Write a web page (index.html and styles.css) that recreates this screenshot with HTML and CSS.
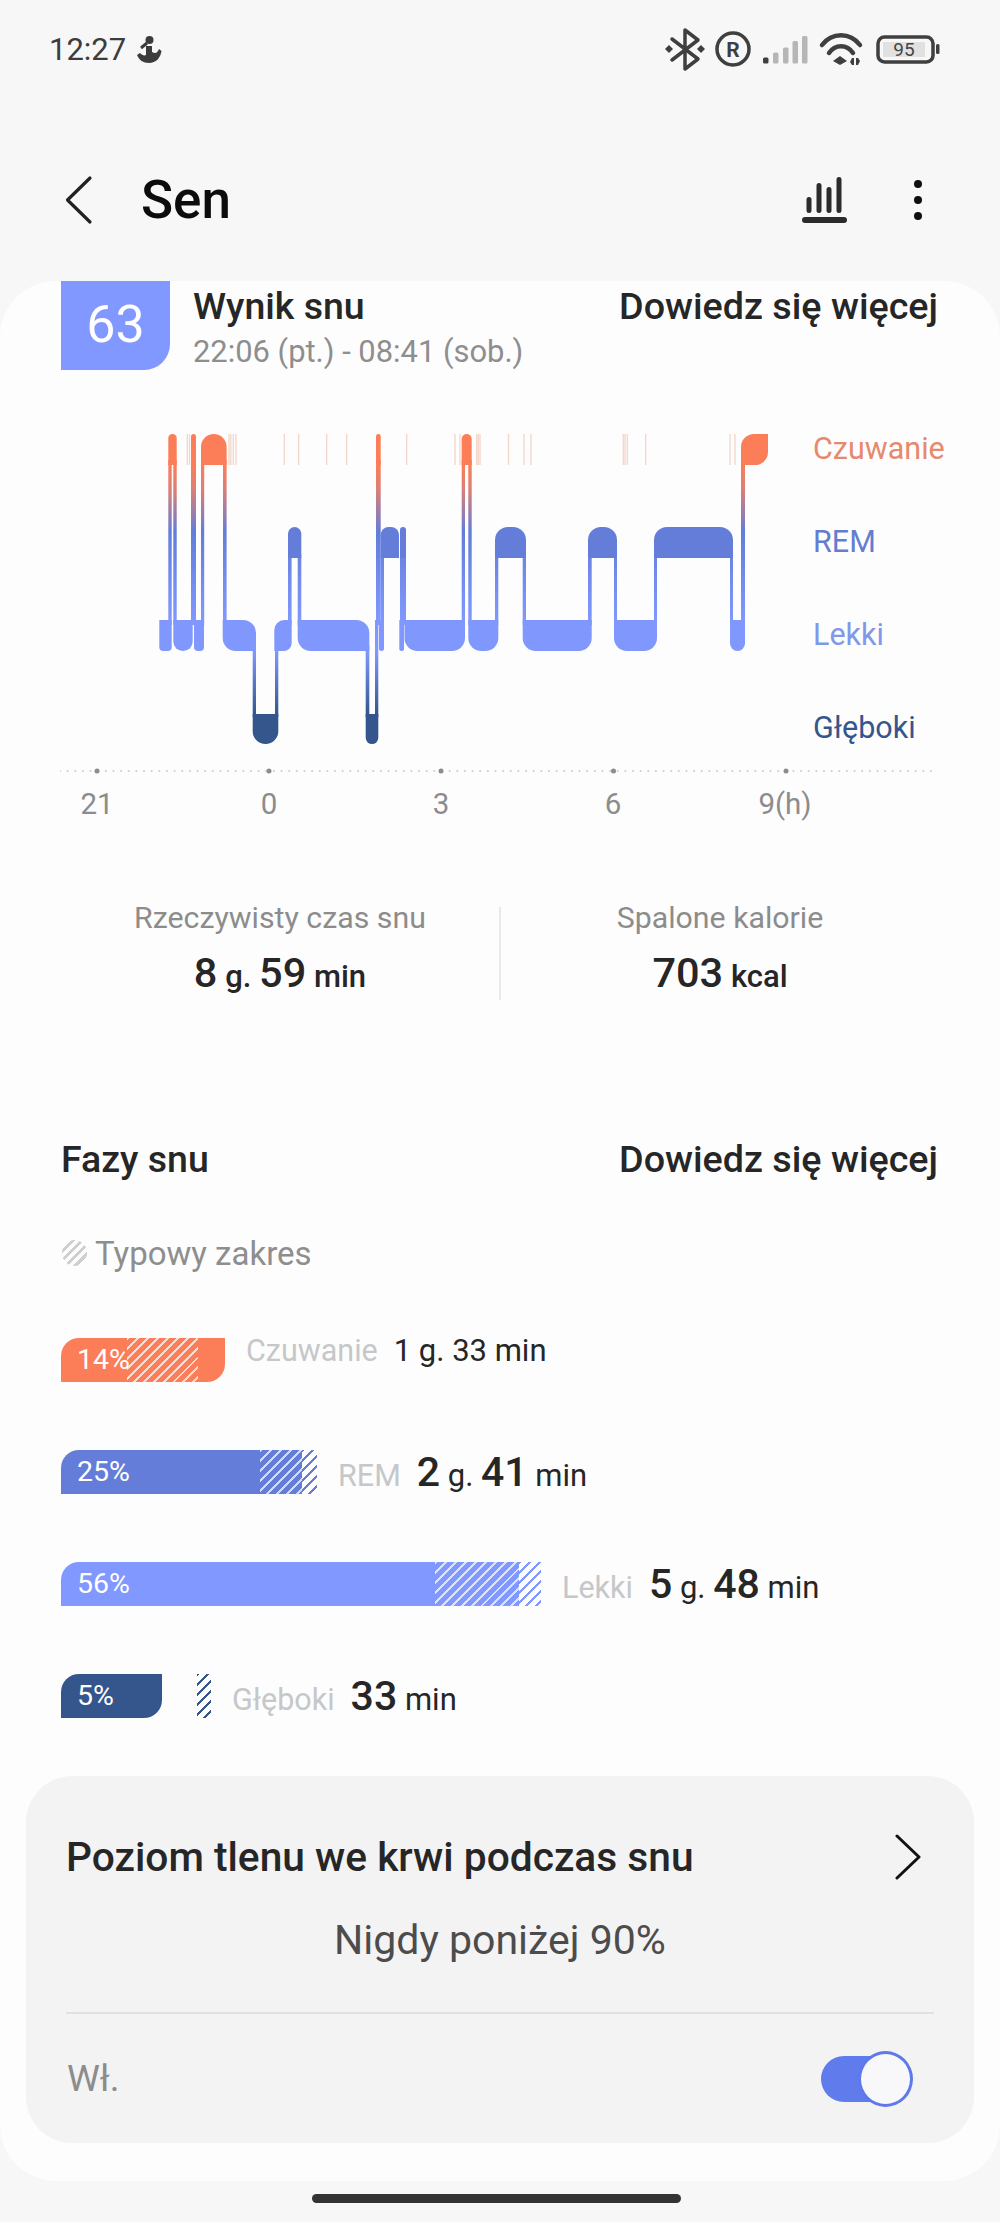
FILE: index.html
```html
<!DOCTYPE html>
<html lang="pl">
<head>
<meta charset="utf-8">
<title>Sen</title>
<link rel="stylesheet" href="styles.css">
</head>
<body>
<div class="screen">
  <div class="status">
    <span class="time">12:27</span>
    <svg class="status-fig" width="26" height="30" viewBox="0 0 26 30"><circle cx="13.5" cy="6" r="4"/><path d="M10 12L16 12L16 18C20 20 21 19 23 15L25.500 17C24.500 24 20 29 13 29C7 29 3 26 1 21L4 19C6 21 8 22 10 21Z"/><path class="fig-line" d="M5 14L11 9"/></svg>
    <svg class="status-icons" width="285" height="46" viewBox="660 25 285 46">
      <g class="ic-line"><path d="M672 38L698 58L685 68V29L698 39L672 59"/></g>
      <path class="ic-fill" d="M669 44L673 48L669 52L665 48ZM701 44L705 48L701 52L697 48Z"/>
      <circle class="ic-line" cx="733" cy="48" r="16"/>
      <text class="ic-r" x="733" y="55.500">R</text>
      <rect class="ic-fill" x="763" y="56.500" width="5.500" height="6" rx="1.500"/>
      <rect class="ic-dim" x="773" y="51.500" width="5.500" height="11" rx="1.500"/>
      <rect class="ic-dim" x="783" y="46.500" width="5.500" height="16" rx="1.500"/>
      <rect class="ic-dim" x="792.500" y="40" width="5.500" height="22.500" rx="1.500"/>
      <rect class="ic-dim" x="802" y="35" width="5.500" height="27.500" rx="1.500"/>
      <g class="ic-wifi"><path d="M822 44C832 31 850 31 860 44"/><path d="M829 52C835 43 847 43 853 52"/></g>
      <path class="ic-fill" d="M840 55L847 60L840 64L833 60Z"/>
      <path class="ic-fill" d="M852 57L854 57L854 64L852 64L850 61ZM856 57L858 57L860 60L858 64L856 64Z"/>
      <rect class="ic-line" x="878" y="36" width="55" height="25" rx="6.500"/>
      <rect class="ic-batt" x="883" y="41" width="42" height="15"/>
      <text class="ic-pct" x="904" y="55">95</text>
      <rect class="ic-fill" x="936" y="43" width="3.500" height="10" rx="1.500"/>
    </svg>
  </div>

  <div class="appbar">
    <svg class="back" width="30" height="50" viewBox="0 0 30 50"><path d="M26 3L3.500 25L26 47"/></svg>
    <h1 class="title">Sen</h1>
    <svg class="chart-ic" width="50" height="50" viewBox="0 0 50 50"><path d="M9 24.500V35.500M19 10.500V35.500M29 14.500V35.500M39 4.500V35.500"/><path class="chart-base" d="M5 45H44"/></svg>
    <svg class="dots" width="20" height="50" viewBox="0 0 20 50"><circle cx="10" cy="9" r="4"/><circle cx="10" cy="25" r="4"/><circle cx="10" cy="41" r="4"/></svg>
  </div>

  <main class="card">
    <div class="score-row">
      <div class="badge">63</div>
      <div class="score-text">
        <div class="heading">Wynik snu</div>
        <div class="sub">22:06 (pt.) - 08:41 (sob.)</div>
      </div>
      <div class="link">Dowiedz się więcej</div>
    </div>

    <div class="plot-row">
      <svg class="plot" width="640" height="360" viewBox="150 402 640 360">
        <defs>
          <linearGradient id="stem" gradientUnits="userSpaceOnUse" x1="0" y1="465" x2="0" y2="714">
            <stop offset="0" stop-color="#fb7e58"/>
            <stop offset="0.1" stop-color="#d97f78"/>
            <stop offset="0.27" stop-color="#637dd9"/>
            <stop offset="0.62" stop-color="#8098fe"/>
            <stop offset="0.75" stop-color="#8098fe"/>
            <stop offset="1" stop-color="#34568c"/>
          </linearGradient>
        </defs>
        <g class="ticks">
          <path d="M187.300 434V465M189.500 434V465M229 434V465M230.800 434V465M233.300 434V465M236 434V465M284.300 434V465M298.700 434V465M326.700 434V465M346.700 434V465M406.700 434V465M455 434V465M460 434V465M476.700 434V465M478.300 434V465M480 434V465M508.500 434V465M524 434V465M531 434V465M623.300 434V465M625 434V465M627.300 434V465M645.700 434V465M730 434V465M735 434V465"/>
        </g>
        <g fill="url(#stem)">
          <rect x="168.300" y="460" width="3.400" height="165"/>
          <rect x="173.300" y="460" width="3.400" height="165"/>
          <rect x="191" y="460" width="5" height="165"/>
          <rect x="201" y="460" width="3.200" height="165"/>
          <rect x="223" y="460" width="3.600" height="165"/>
          <rect x="288" y="555" width="3.600" height="70"/>
          <rect x="297.700" y="555" width="3.600" height="70"/>
          <rect x="376" y="460" width="4.700" height="165"/>
          <rect x="380.700" y="555" width="3.300" height="70"/>
          <rect x="400" y="555" width="6" height="70"/>
          <rect x="461.700" y="460" width="3.300" height="165"/>
          <rect x="468.300" y="460" width="3.400" height="165"/>
          <rect x="495" y="555" width="3.300" height="70"/>
          <rect x="522.700" y="555" width="3.300" height="70"/>
          <rect x="588" y="555" width="3.700" height="70"/>
          <rect x="614" y="555" width="3" height="70"/>
          <rect x="654" y="555" width="3" height="70"/>
          <rect x="730" y="555" width="3" height="70"/>
          <rect x="741" y="460" width="4" height="165"/>
          <rect x="252.700" y="645" width="3.300" height="72"/>
          <rect x="275" y="645" width="3.300" height="72"/>
          <rect x="365.700" y="645" width="3.600" height="72"/>
          <rect x="375" y="620" width="3.300" height="97"/>
        </g>
        <g class="st-wake">
          <path d="M168.300 465V438.200A4.200 4.200 0 0 1 176.700 438.200V465Z"/>
          <path d="M191 465V436.500A2.500 2.500 0 0 1 196 436.500V465Z"/>
          <path d="M201 465V446.800A12.800 12.800 0 0 1 226.600 446.800V465Z"/>
          <path d="M376 465V436.300A2.350 2.350 0 0 1 380.700 436.300V465Z"/>
          <path d="M461.700 465V439A5 5 0 0 1 471.700 439V465Z"/>
          <path d="M741 465V447A13 13 0 0 1 754 434H768V452A13 13 0 0 1 755 465Z"/>
        </g>
        <g class="st-rem">
          <path d="M288 558V533.600A6.650 6.650 0 0 1 301.300 533.600V558Z"/>
          <path d="M380.700 558V535A8 8 0 0 1 388.700 527H391A8 8 0 0 1 399 535V558Z"/>
          <path d="M400 558V530A3 3 0 0 1 406 530V558Z"/>
          <path d="M495 558V540A13 13 0 0 1 508 527H513A13 13 0 0 1 526 540V558Z"/>
          <path d="M588 558V540A13 13 0 0 1 601 527H604A13 13 0 0 1 617 540V558Z"/>
          <path d="M654 558V540A13 13 0 0 1 667 527H720A13 13 0 0 1 733 540V558Z"/>
        </g>
        <g class="st-light">
          <path d="M159.300 620H171.700V647A4 4 0 0 1 167.700 651H163.300A4 4 0 0 1 159.300 647Z"/>
          <path d="M173.300 620H192.700V641.500A9.500 9.500 0 0 1 183.200 651H182.800A9.500 9.500 0 0 1 173.300 641.500Z"/>
          <path d="M194 620H204V647A4 4 0 0 1 200 651H198A4 4 0 0 1 194 647Z"/>
          <path d="M222.700 620H243A13 13 0 0 1 256 633V651H235.700A13 13 0 0 1 222.700 638Z"/>
          <path d="M274.300 651V630A10 10 0 0 1 284.300 620H291.700V643A8 8 0 0 1 283.700 651Z"/>
          <path d="M297.700 620H356.300A13 13 0 0 1 369.300 633V651H310.700A13 13 0 0 1 297.700 638Z"/>
          <path d="M379 620H384V648.500A2.500 2.500 0 0 1 379 648.500Z"/>
          <path d="M399.300 620H404V649A2 2 0 0 1 402 651H401.300A2 2 0 0 1 399.300 649Z"/>
          <path d="M404.500 620H465V638A13 13 0 0 1 452 651H417.500A13 13 0 0 1 404.500 638Z"/>
          <path d="M468.300 620H498.300V638A13 13 0 0 1 485.300 651H481.300A13 13 0 0 1 468.300 638Z"/>
          <path d="M522.700 620H591.700V638A13 13 0 0 1 578.700 651H535.700A13 13 0 0 1 522.700 638Z"/>
          <path d="M614 620H657V638A13 13 0 0 1 644 651H627A13 13 0 0 1 614 638Z"/>
          <path d="M730 620H745V643.500A7.500 7.500 0 0 1 730 643.500Z"/>
        </g>
        <g class="st-deep">
          <path d="M252.700 714H278.300V731.200A12.800 12.800 0 0 1 252.700 731.200Z"/>
          <path d="M365.700 714H378.300V737.700A6.300 6.300 0 0 1 365.700 737.700Z"/>
        </g>
      </svg>
      <div class="legend">
        <div class="legend-item lg-wake">Czuwanie</div>
        <div class="legend-item lg-rem">REM</div>
        <div class="legend-item lg-light">Lekki</div>
        <div class="legend-item lg-deep">Głęboki</div>
      </div>
    </div>

    <svg class="axis" width="880" height="18" viewBox="60 762 880 18">
      <path class="axis-dots" d="M60 771H933"/>
      <g class="axis-major"><circle cx="97" cy="771" r="2.500"/><circle cx="269" cy="771" r="2.500"/><circle cx="441" cy="771" r="2.500"/><circle cx="613.500" cy="771" r="2.500"/><circle cx="786" cy="771" r="2.500"/></g>
    </svg>
    <div class="axis-labels">
      <span>21</span><span>0</span><span>3</span><span>6</span><span>9(h)</span>
    </div>

    <div class="stats">
      <div class="stat">
        <div class="stat-label">Rzeczywisty czas snu</div>
        <div class="stat-value"><b>8</b> g. <b>59</b> min</div>
      </div>
      <div class="stat-divider"></div>
      <div class="stat">
        <div class="stat-label">Spalone kalorie</div>
        <div class="stat-value"><b>703</b> kcal</div>
      </div>
    </div>

    <div class="phases-head">
      <div class="heading">Fazy snu</div>
      <div class="link">Dowiedz się więcej</div>
    </div>
    <div class="typical"><span class="typical-ic"></span>Typowy zakres</div>

    <div class="phase phase-wake">
      <div class="bar bar-wake"><span class="pct">14%</span><i class="hatch hatch-wake"></i></div>
      <div class="phase-text"><span class="phase-name">Czuwanie</span><span class="phase-val">1 g. 33 min</span></div>
    </div>
    <div class="phase phase-rem">
      <div class="bar bar-rem"><span class="pct">25%</span><i class="hatch hatch-rem"></i></div>
      <i class="over over-rem"></i>
      <div class="phase-text"><span class="phase-name">REM</span><span class="phase-val"><b>2</b> g. <b>41</b> min</span></div>
    </div>
    <div class="phase phase-light">
      <div class="bar bar-light"><span class="pct">56%</span><i class="hatch hatch-light"></i></div>
      <i class="over over-light"></i>
      <div class="phase-text"><span class="phase-name">Lekki</span><span class="phase-val"><b>5</b> g. <b>48</b> min</span></div>
    </div>
    <div class="phase phase-deep">
      <div class="bar bar-deep"><span class="pct">5%</span></div>
      <i class="over over-deep"></i>
      <div class="phase-text"><span class="phase-name">Głęboki</span><span class="phase-val"><b>33</b> min</span></div>
    </div>

    <section class="oxygen">
      <div class="oxygen-head">
        <div class="heading heading-long">Poziom tlenu we krwi podczas snu</div>
        <svg class="chev" width="28" height="46" viewBox="0 0 28 46"><path d="M3 2L25 23L3 44"/></svg>
      </div>
      <div class="oxygen-val">Nigdy poniżej 90%</div>
      <div class="oxygen-line"></div>
      <div class="oxygen-foot">
        <span class="oxygen-on">Wł.</span>
        <div class="toggle"><span class="track"></span><span class="knob"></span></div>
      </div>
    </section>
  </main>

  <div class="homebar"></div>
</div>
</body>
</html>
```
FILE: styles.css
```css
* { box-sizing: border-box; }
html, body { margin: 0; padding: 0; }
body { background: #f7f7f7; font-family: Roboto, "Noto Sans", sans-serif; color: #262626; }
.screen { width: 1000px; height: 2222px; overflow: hidden; background: #f7f7f7; }
svg { display: block; flex: none; }

/* status bar */
.status { height: 98px; display: flex; align-items: center; padding: 0 55px 0 49px; }
.time { font-size: 31px; color: #3c3c3c; }
.status-fig { margin-left: 10px; fill: #3c3c3c; }
.fig-line { fill: none; stroke: #3c3c3c; stroke-width: 3; }
.status-icons { margin-left: auto; }
.ic-line { fill: none; stroke: #3f3f3f; stroke-width: 3.5; stroke-linejoin: round; stroke-linecap: round; }
.ic-wifi { fill: none; stroke: #3f3f3f; stroke-width: 4.5; stroke-linecap: round; }
.ic-fill { fill: #3f3f3f; }
.ic-dim { fill: #b6b6b6; }
.ic-batt { fill: #e1e1e1; }
.ic-r { font-size: 21px; font-weight: 700; fill: #3f3f3f; text-anchor: middle; }
.ic-pct { font-size: 19px; fill: #454545; text-anchor: middle; }

/* app bar */
.appbar { height: 183px; padding: 21px 72px 0 64px; display: flex; align-items: center; }
.back path { fill: none; stroke: #222; stroke-width: 3.2; stroke-linecap: round; stroke-linejoin: round; }
.title { margin: 0 0 0 47px; font-size: 53px; font-weight: 500; color: #0c0c0c; line-height: 60px; }
.chart-ic { margin-left: auto; }
.chart-ic path { fill: none; stroke: #2b2b2b; stroke-width: 5; stroke-linecap: round; }
.chart-ic .chart-base { stroke-width: 6; }
.dots { margin-left: 58px; fill: #0f0f0f; }

/* main card */
.card { height: 1900px; background: #fdfdfd; border-radius: 56px; }
.score-row { display: flex; align-items: flex-start; padding: 0 62px 0 61px; }
.badge { width: 109px; height: 89px; background: #8098ff; color: #fff; border-bottom-right-radius: 26px; font-size: 52px; font-weight: 400; line-height: 88px; text-align: center; }
.score-text { margin-left: 23px; }
.heading { font-size: 37.500px; font-weight: 500; line-height: 50px; color: #262626; }
.heading-long { font-size: 40.700px; }
.sub { margin-top: 3px; font-size: 30.900px; line-height: 36px; color: #8e8e8e; }
.link { margin-left: auto; font-size: 37.700px; font-weight: 500; line-height: 50px; color: #262626; }

/* chart */
.plot-row { margin-top: 32px; height: 360px; display: flex; padding-left: 150px; }
.ticks path { fill: none; stroke: #f4d6c9; stroke-width: 1.300; }
.st-wake { fill: #fb7e58; }
.st-rem { fill: #637dd9; }
.st-light { fill: #8098fe; }
.st-deep { fill: #34568c; }
.legend { margin-left: 23px; }
.legend-item { height: 93px; line-height: 93px; font-size: 30.500px; }
.lg-wake { color: #e58a6e; }
.lg-rem { color: #637dd0; }
.lg-light { color: #8098ea; }
.lg-deep { color: #34568c; }
.axis { margin-left: 60px; }
.axis-dots { fill: none; stroke: #cfcfcf; stroke-width: 2.200; stroke-linecap: round; stroke-dasharray: 0 7.640; }
.axis-major { fill: #8c8c8c; }
.axis-labels { height: 46px; margin-left: 11px; display: flex; line-height: 48px; font-size: 29.500px; color: #8c8c8c; }
.axis-labels span { width: 172px; text-align: center; }

/* stats */
.stats { margin: 74px 61px 0; height: 110px; display: flex; }
.stat { flex: 1; text-align: center; }
.stat-label { font-size: 30.300px; line-height: 36px; color: #8c8c8c; }
.stat-value { font-size: 31px; line-height: 74px; font-weight: 500; color: #262626; }
.stat-value b { font-size: 41.500px; font-weight: 500; }
.stat-divider { width: 2px; margin: 7px 0 10px; background: #e9e9e9; }

/* phases */
.phases-head { margin-top: 124px; padding: 0 62px 0 61px; display: flex; }
.typical { margin: 49px 0 0 62px; height: 40px; display: flex; align-items: center; font-size: 33px; color: #8e8e8e; }
.typical-ic { width: 25px; height: 26px; margin-right: 8px; border-radius: 50%; background: repeating-linear-gradient(135deg, #cfcfcf 0 3px, transparent 3px 6.500px); }
.phase { height: 44px; margin-top: 68px; margin-left: 61px; display: flex; align-items: center; }
.phase-wake { margin-top: 65px; }
.bar { position: relative; height: 44px; border-top-left-radius: 18px; color: #fff; flex: none; }
.bar-wake { width: 164px; background: #fb7e58; border-bottom-right-radius: 18px; }
.bar-rem { width: 241px; background: #637dd9; }
.bar-light { width: 458px; background: #8098ff; }
.bar-deep { width: 101px; background: #34568c; border-bottom-right-radius: 18px; }
.pct { display: block; padding-left: 16px; font-size: 28.500px; line-height: 44px; }
.hatch { position: absolute; top: 0; bottom: 0; background: repeating-linear-gradient(135deg, rgba(255,255,255,.72) 0 2px, transparent 2px 7px); }
.hatch-wake { left: 66px; width: 71px; }
.hatch-rem { left: 199px; width: 42px; }
.hatch-light { left: 374px; width: 84px; }
.over { display: block; height: 44px; flex: none; }
.over-rem { width: 15px; background: repeating-linear-gradient(135deg, #637dd9 0 2px, #fdfdfd 2px 7px); }
.over-light { width: 22px; background: repeating-linear-gradient(135deg, #8098ff 0 2px, #fdfdfd 2px 7px); }
.over-deep { width: 14px; margin-left: 35px; background: repeating-linear-gradient(135deg, #34568c 0 2px, #fdfdfd 2px 7px); }
.phase-text { margin-left: 21px; display: flex; align-items: baseline; white-space: nowrap; }
.phase-wake .phase-text { margin-bottom: 20px; }
.phase-name { font-size: 30.500px; color: #c6c7c9; margin-right: 16px; }
.phase-val { font-size: 31px; color: #262626; }
.phase-val b { font-size: 41px; font-weight: 500; }

/* oxygen card */
.oxygen { margin: 58px 26px 0; height: 367px; padding: 56px 40px 0; background: #f3f3f4; border-radius: 46px; }
.oxygen-head { display: flex; align-items: center; justify-content: space-between; padding-right: 12px; }
.chev path { fill: none; stroke: #111; stroke-width: 3; stroke-linecap: round; stroke-linejoin: round; }
.oxygen-val { margin-top: 36px; text-align: center; font-size: 41px; line-height: 44px; color: #4c4c4c; }
.oxygen-line { margin-top: 50px; height: 2px; background: #e1e1e1; }
.oxygen-foot { height: 129px; display: flex; align-items: center; justify-content: space-between; padding-left: 1px; }
.oxygen-on { font-size: 37px; color: #8c8c8c; }
.toggle { display: flex; align-items: center; margin-right: 21px; }
.track { display: block; width: 60px; height: 46px; background: #5f7bec; border-radius: 23px 0 0 23px; }
.knob { display: block; width: 55px; height: 56px; margin-left: -23px; background: #f8f8fb; border: 3px solid #6079ea; border-radius: 50%; }

/* home indicator */
.homebar { width: 369px; height: 9px; margin: 13px 0 0 312px; background: #333; border-radius: 5px; }
```
